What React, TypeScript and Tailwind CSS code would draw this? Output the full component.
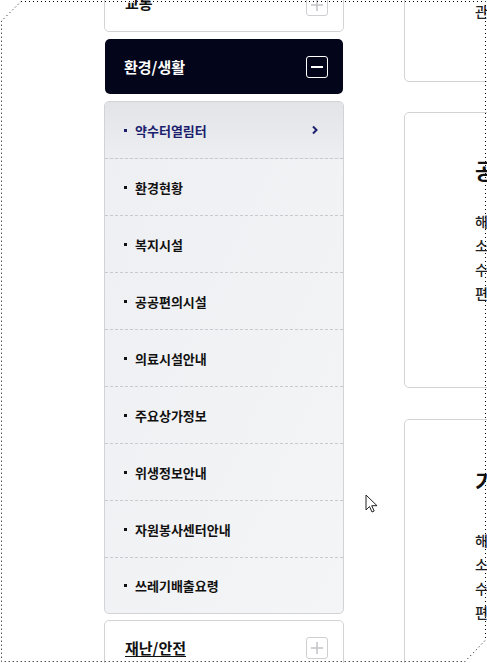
import React from "react";

const items = [
  "약수터열림터",
  "환경현황",
  "복지시설",
  "공공편의시설",
  "의료시설안내",
  "주요상가정보",
  "위생정보안내",
  "자원봉사센터안내",
  "쓰레기배출요령",
];

const font = { fontFamily: '"Noto Sans CJK KR", "Noto Sans", sans-serif' };

function PlusBox() {
  return (
    <div className="w-[22px] h-[22px] border border-[#cfcfd3] rounded-[3px] flex items-center justify-center">
      <svg width="14" height="14" viewBox="0 0 14 14">
        <path d="M7 1v12M1 7h12" stroke="#c4c4c8" strokeWidth="1.5" />
      </svg>
    </div>
  );
}

function CollapsedCard({ title, underline, textShift }: { title: string; underline?: boolean; textShift?: boolean }) {
  return (
    <div className="h-[55px] bg-white border border-[#d3d3d6] rounded-[5px] flex items-center justify-between pl-[20px] pr-[15px]">
      <span
        className={
          "text-[15px] font-bold text-[#111] leading-none " +
          (underline ? "underline underline-offset-2 " : "") +
          (textShift ? "-mt-[4px]" : "")
        }
      >
        {title}
      </span>
      <PlusBox />
    </div>
  );
}

function RightLines() {
  return (
    <div className="flex flex-col text-[14px] leading-[24px] text-[#222] font-medium whitespace-nowrap">
      <span>해당 시설의 안내 정보입니다</span>
      <span>소재지 및 이용 시간</span>
      <span>수용 인원 및 문의처</span>
      <span>편의시설 이용 안내</span>
    </div>
  );
}

export default function App() {
  return (
    <div className="relative w-[487px] h-[663px] overflow-hidden bg-white" style={font}>
      <div className="flex mt-[-23px]">
        {/* left column */}
        <div className="ml-[104px] w-[240px] flex flex-col shrink-0">
          <CollapsedCard title="교통" textShift />
          <div className="mt-[7px] h-[55px] bg-[#03051b] rounded-[5px] mx-[1px] flex items-center justify-between pl-[19px] pr-[15px]">
            <span className="text-[15px] font-bold text-white leading-none">환경/생활</span>
            <div className="w-[22px] h-[22px] border border-white rounded-[3px] flex items-center justify-center">
              <div className="w-[12px] h-[2px] bg-white" />
            </div>
          </div>
          <div className="mt-[7px] border border-[#d2d3d7] rounded-[5px] bg-gradient-to-br from-[#eeeff2] to-[#f4f5f7] overflow-hidden">
            {items.map((t, i) => (
              <div
                key={t}
                className={
                  "flex items-center justify-between pl-[19px] pr-[24px] " +
                  (i < items.length - 1 ? "h-[57px] border-b border-dashed border-[#c9cacd] " : "h-[55px] ") +
                  (i === 0 ? "bg-gradient-to-b from-[#e3e4e8] to-[#eceef1]" : "")
                }
              >
                <div className="flex items-center">
                  <span className={"w-[3px] h-[3px] mr-[8px] " + (i === 0 ? "bg-[#1b1f6e]" : "bg-[#111]")} />
                  <span className={"text-[13px] font-bold leading-none " + (i === 0 ? "text-[#1b1f6e]" : "text-[#111]")}>
                    {t}
                  </span>
                </div>
                {i === 0 && (
                  <svg width="8" height="10" viewBox="0 0 8 10">
                    <path d="M2 1.5l3.5 3.5L2 8.5" stroke="#1b1f6e" strokeWidth="2" fill="none" />
                  </svg>
                )}
              </div>
            ))}
          </div>
          <div className="mt-[6px]">
            <CollapsedCard title="재난/안전" underline />
          </div>
        </div>

        {/* right column */}
        <div className="ml-[60px] w-[300px] shrink-0 flex flex-col">
          <div className="h-[105px] border border-[#d3d3d6] rounded-[5px] pl-[70px] flex flex-col justify-end pb-[63px]">
            <span className="text-[14px] text-[#222] font-medium leading-none whitespace-nowrap">관련 안내</span>
          </div>
          <div className="mt-[30px] h-[276px] border border-[#d3d3d6] rounded-[5px] pl-[70px] pt-[41px]">
            <div className="text-[22px] font-bold text-[#111] leading-[30px] whitespace-nowrap">공공편의시설</div>
            <div className="mt-[25px]">
              <RightLines />
            </div>
          </div>
          <div className="mt-[31px] h-[300px] border border-[#d3d3d6] rounded-[5px] pl-[70px] pt-[45px]">
            <div className="text-[22px] font-bold text-[#111] leading-[30px] whitespace-nowrap">기타시설</div>
            <div className="mt-[33px]">
              <RightLines />
            </div>
          </div>
        </div>
      </div>

      {/* mouse cursor */}
      <svg className="absolute left-[365px] top-[494px]" width="14" height="20" viewBox="0 0 14 20">
        <path d="M1 1v15l3.5-3.5 2.5 5.5 2.2-1-2.5-5.3H12L1 1z" fill="white" stroke="#222" strokeWidth="1" strokeLinejoin="round" />
      </svg>

      {/* dotted capture frame */}
      <svg className="absolute inset-0 pointer-events-none" width="487" height="663">
        <path
          d="M21 1.5H485.5V640L465 661.5H1.5V21L21 1.5Z"
          fill="none"
          stroke="#000"
          strokeWidth="1"
          strokeDasharray="1 3"
        />
      </svg>
    </div>
  );
}
